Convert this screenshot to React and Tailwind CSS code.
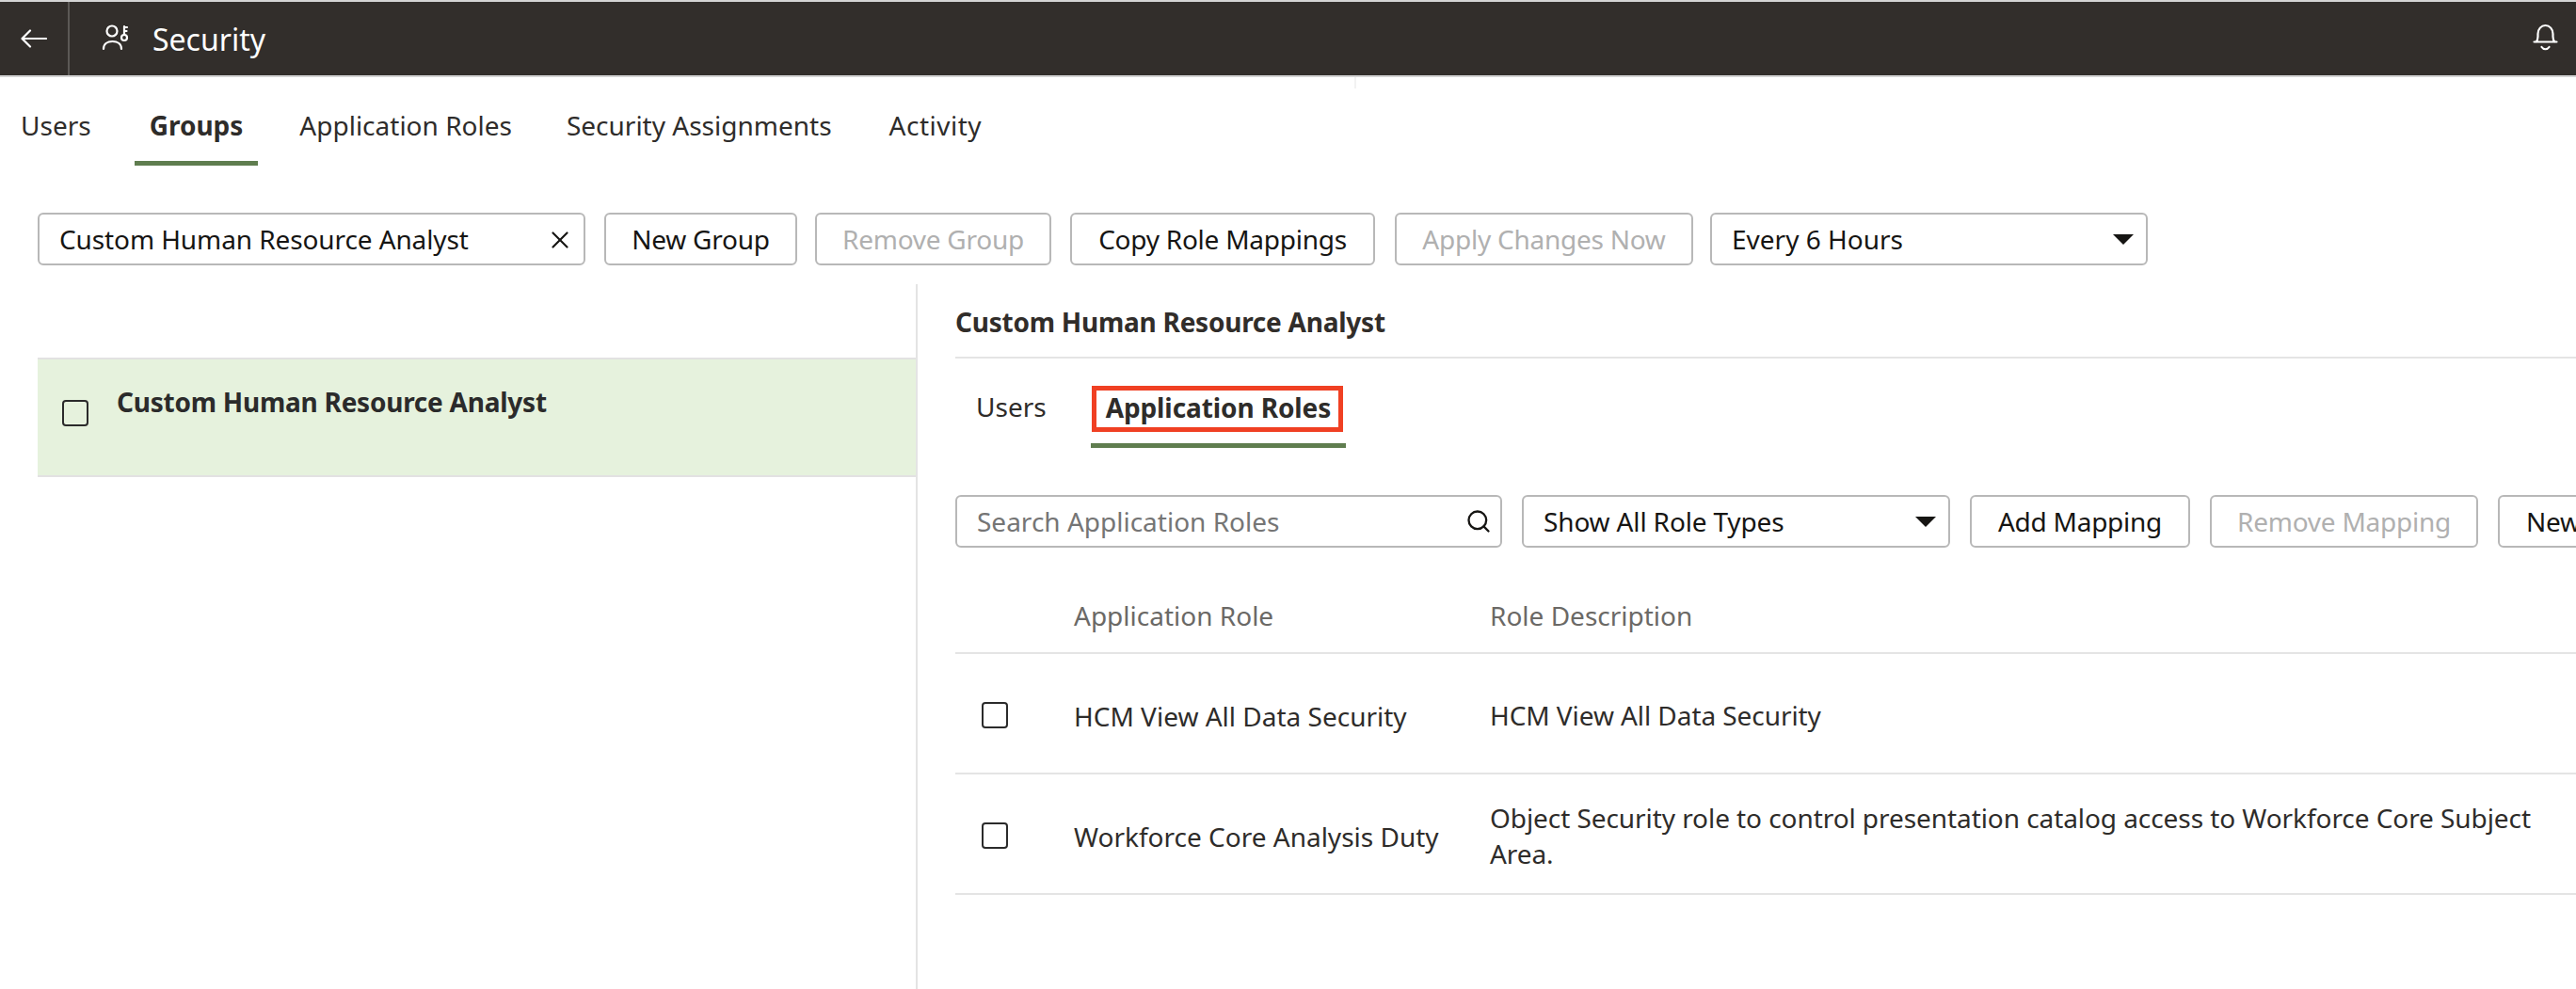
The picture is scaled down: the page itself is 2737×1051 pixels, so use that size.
import React from 'react';
import { Search, X } from 'lucide-react';

const font = { fontFamily: '"Noto Sans", "Open Sans", sans-serif' };

function BackIcon() {
  return (
    <svg width="28" height="20" viewBox="0 0 28 20" fill="none" stroke="#fff" strokeWidth="2.2" strokeLinecap="round" strokeLinejoin="round">
      <path d="M27 10H2" />
      <path d="M10 1.500 L1.500 10 L10 18.500" />
    </svg>
  );
}

function SecurityIcon() {
  return (
    <svg width="32" height="32" viewBox="0 0 32 32" fill="none" stroke="#fff" strokeWidth="2.2" strokeLinecap="round">
      <circle cx="12" cy="8" r="5.500" />
      <path d="M3 27 c0-5 4-8 9.500-8 c5.500 0 9.500 3 9.500 8" />
      <circle cx="25" cy="15" r="3" />
      <path d="M25 12 V3 M25 4 h3 M25 8 h2.500" />
    </svg>
  );
}

function BellIcon() {
  return (
    <svg width="27" height="30" viewBox="0 0 27 30" fill="none" stroke="#fff" strokeWidth="2.2" strokeLinecap="round" strokeLinejoin="round">
      <path d="M1.500 19.500 h24 M3.500 19.500 c1.500-1.500 2-3 2-5.500 v-3 c0-5 3.500-9 8-9 c4.500 0 8 4 8 9 v3 c0 2.500 0.500 4 2 5.500" />
      <path d="M9.500 25 c2 3 6 3 8 0" />
    </svg>
  );
}

function Button({ children, disabled, className = '' }) {
  return (
    <button className={`h-14 rounded-md border-2 border-[#b8b8b8] bg-white text-[28px] tracking-[-0.25px] shrink-0 ${disabled ? 'text-[#b0b0b0]' : 'text-[#161513]'} ${className}`}>
      {children}
    </button>
  );
}

function Select({ label, className = '' }) {
  return (
    <div className={`h-14 rounded-md border-2 border-[#b8b8b8] bg-white flex items-center justify-between text-[28px] text-[#161513] pl-[21px] pr-[13px] shrink-0 ${className}`}>
      <span>{label}</span>
      <span className="w-0 h-0 border-x-[11px] border-x-transparent border-t-[11px] border-t-[#161513]" />
    </div>
  );
}

function Checkbox() {
  return <div className="w-7 h-7 rounded-[4px] border-2 border-[#2b2b2b] shrink-0" />;
}

function Row({ role, children }) {
  return (
    <div className="h-[128px] border-b-2 border-[#e4e4e4] pt-[3px] flex items-center text-[28px] text-[#2e2c2a]">
      <div className="w-[126px] pl-7 shrink-0"><Checkbox /></div>
      <div className="w-[442px] shrink-0 pt-[2px]">{role}</div>
      <div className="flex-1 leading-[38px] tracking-[-0.07px] pt-[1px]">{children}</div>
    </div>
  );
}

export default function App() {
  return (
    <div className="h-[1051px] w-[2737px] overflow-hidden bg-white" style={font}>
      {/* Header */}
      <div className="h-[82px] border-y-2 border-[#d4d4d4] bg-[#322e2b] flex items-center text-white">
        <div className="w-[74px] h-full border-r-2 border-[#5c5956] flex items-center justify-center shrink-0">
          <BackIcon />
        </div>
        <div className="ml-[33px]"><SecurityIcon /></div>
        <span className="ml-[23px] text-[32px] pt-[2px]">Security</span>
        <div className="ml-auto mr-[19px] mb-[3px]"><BellIcon /></div>
      </div>

      {/* Main tabs */}
      <div className="relative flex h-[94px] pl-[6px] text-[28px] text-[#2e2c2a]">
        <div className="px-4 pt-[7px] flex items-center h-full">Users</div>
        <div className="ml-[30px] px-4 pt-[12px] flex items-center h-full font-bold border-b-[5px] border-[#5f7d4f]">Groups</div>
        <div className="ml-7 px-4 pt-[7px] flex items-center h-full">Application Roles</div>
        <div className="ml-[26px] px-4 pt-[7px] flex items-center h-full">Security Assignments</div>
        <div className="ml-[29px] px-4 pt-[7px] flex items-center h-full tracking-[0.5px]">Activity</div>
        <div className="absolute left-[1439px] top-0 w-[2px] h-[12px] bg-[#f2f2f2]" />
      </div>

      {/* Toolbar */}
      <div className="flex gap-5 pl-10 mt-[50px]">
        <div className="w-[582px] h-14 rounded-md border-2 border-[#b8b8b8] flex items-center justify-between pl-[21px] pr-[10px] text-[28px] tracking-[-0.1px] text-[#161513] shrink-0">
          <span>Custom Human Resource Analyst</span>
          <X size={30} strokeWidth={1.7} className="mt-[2px]" />
        </div>
        <Button className="w-[205px]">New Group</Button>
        <Button disabled className="w-[251px] ml-[-1px]">Remove Group</Button>
        <Button className="w-[324px]">Copy Role Mappings</Button>
        <Button disabled className="w-[317px] ml-px">Apply Changes Now</Button>
        <Select label="Every 6 Hours" className="w-[465px] ml-[-2px]" />
      </div>

      {/* Body */}
      <div className="flex mt-5 pl-10 h-[749px]">
        <div className="w-[935px] border-r-2 border-[#e4e4e4] pt-[78px] shrink-0">
          <div className="h-[127px] bg-[#e6f2dd] border-y-2 border-[#e2e2e2] flex pl-[26px] gap-[30px] pt-[24px] text-[28px] font-bold tracking-[-0.24px] text-[#2b2b2b]">
            <div className="pt-[19px]"><Checkbox /></div>
            <span>Custom Human Resource Analyst</span>
          </div>
        </div>

        <div className="flex-1 pl-10 min-w-0 overflow-hidden">
          <div className="h-[79px] border-b-2 border-[#e4e4e4] pt-[3px] flex items-center text-[28px] font-bold tracking-[-0.24px] text-[#312d2a]">
            Custom Human Resource Analyst
          </div>

          {/* Sub tabs */}
          <div className="flex h-[95px] text-[28px] text-[#2e2c2a]">
            <div className="px-[22px] pt-[7px] flex items-center">Users</div>
            <div className="ml-[25px] px-4 pt-[14px] flex items-center font-bold tracking-[-0.1px] border-b-[5px] border-[#5f7d4f] relative">
              Application Roles
              <div className="absolute left-[1px] top-[29px] w-[267px] h-[49px] border-[5px] border-[#f04023]" />
            </div>
          </div>

          {/* Mapping toolbar */}
          <div className="flex gap-[21px] mt-[50px]">
            <div className="w-[581px] h-14 rounded-md border-2 border-[#b8b8b8] flex items-center justify-between pl-[21px] pr-[9px] text-[28px] text-[#757575] shrink-0">
              <span>Search Application Roles</span>
              <Search size={28} strokeWidth={2} className="text-[#161513]" />
            </div>
            <Select label="Show All Role Types" className="w-[455px] tracking-[-0.15px]" />
            <Button className="w-[234px]">Add Mapping</Button>
            <Button disabled className="w-[285px]">Remove Mapping</Button>
            <Button className="w-[240px] text-left pl-[28px]">New</Button>
          </div>

          {/* Table */}
          <div className="mt-[36px] h-[77px] border-b-2 border-[#e4e4e4] pb-[3px] flex items-center text-[28px] text-[#6b6966]">
            <div className="w-[126px] shrink-0" />
            <div className="w-[442px] shrink-0">Application Role</div>
            <div>Role Description</div>
          </div>
          <Row role="HCM View All Data Security">HCM View All Data Security</Row>
          <Row role="Workforce Core Analysis Duty">
            Object Security role to control presentation catalog access to Workforce Core Subject Area.
          </Row>
        </div>
      </div>
    </div>
  );
}
